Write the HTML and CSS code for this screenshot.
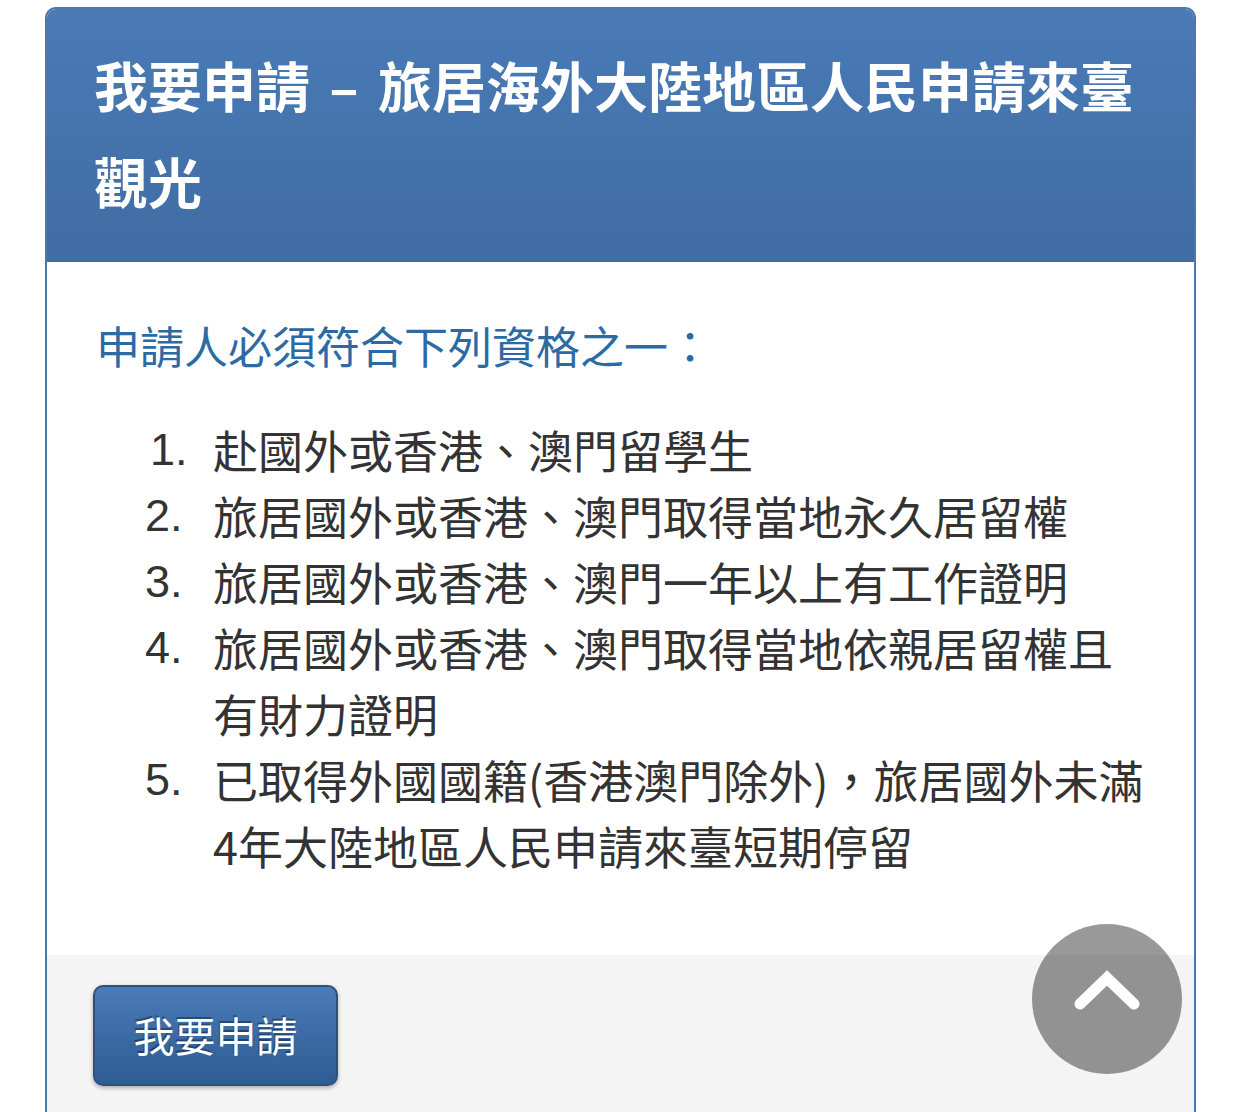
FILE: index.html
```html
<!DOCTYPE html>
<html lang="zh-Hant">
<head>
<meta charset="utf-8">
<title>我要申請</title>
<link rel="stylesheet" href="styles.css">
</head>
<body>
<div class="card">
  <div class="card-header">
    <h3 class="card-title">我要申請 – 旅居海外大陸地區人民申請來臺觀光</h3>
  </div>
  <div class="card-body">
    <p class="lead">申請人必須符合下列資格之一：</p>
    <ol class="reqs">
      <li><span class="num">1.</span><span class="txt">赴國外或香港、澳門留學生</span></li>
      <li><span class="num">2.</span><span class="txt">旅居國外或香港、澳門取得當地永久居留權</span></li>
      <li><span class="num">3.</span><span class="txt">旅居國外或香港、澳門一年以上有工作證明</span></li>
      <li><span class="num">4.</span><span class="txt">旅居國外或香港、澳門取得當地依親居留權且有財力證明</span></li>
      <li><span class="num">5.</span><span class="txt">已取得外國國籍(香港澳門除外)，旅居國外未滿4年大陸地區人民申請來臺短期停留</span></li>
    </ol>
  </div>
  <div class="card-footer">
    <a class="btn" href="#">我要申請</a>
  </div>
</div>
<a class="to-top" href="#" aria-label="回到頂端">
  <svg width="150" height="150" viewBox="0 0 150 150">
    <polyline points="48,80 75,54 102,80" fill="none" stroke="#fff" stroke-width="11" stroke-linecap="round" stroke-linejoin="miter"/>
  </svg>
</a>
</body>
</html>
```
FILE: styles.css
```css
html, body {
  margin: 0;
  padding: 0;
  background: #fff;
}
body {
  padding: 7px 46px 0 45px;
  font-family: "Noto Sans CJK TC", "Noto Sans", sans-serif;
  color: #333;
  height: 1112px;
  box-sizing: border-box;
  overflow: hidden;
}
.card {
  border: 2px solid #4a77ae;
  border-bottom: none;
  border-radius: 11px 11px 0 0;
  overflow: hidden;
}
.card-header {
  background: linear-gradient(to bottom, #4a7bb7 0%, #3f6ca2 100%);
  padding: 28px 40px 33px 47px;
}
.card-title {
  margin: 0;
  color: #fff;
  font-size: 54px;
  font-weight: 700;
  line-height: 96px;
  word-spacing: 7px;
}
.card-body {
  background: #fff;
  padding: 50px 42px 76px 49px;
}
.lead {
  margin: 0 0 39px;
  color: #2c6aa4;
  font-size: 44px;
  line-height: 66px;
}
.reqs {
  list-style: none;
  margin: 0;
  padding: 0 0 0 49px;
}
.reqs li {
  display: flex;
  font-size: 45px;
  line-height: 66px;
  color: #333;
}
.num {
  flex: 0 0 68px;
  font-family: "Liberation Sans", "Noto Sans CJK TC", sans-serif;
}
.reqs li:first-child .num {
  padding-left: 5px;
  flex-basis: 63px;
}
.txt {
  flex: 1 1 auto;
}
.card-footer {
  background: #f4f4f4;
  padding: 30px 46px 40px;
}
.btn {
  display: inline-flex;
  align-items: center;
  justify-content: center;
  box-sizing: border-box;
  width: 245px;
  height: 101px;
  padding-bottom: 3px;
  border: 2px solid #2c5180;
  border-radius: 10px;
  background: linear-gradient(to bottom, #4a7cb8 0%, #3a69a2 55%, #2f5c93 100%);
  box-shadow: 0 2px 4px rgba(0, 0, 0, 0.3);
  color: #fff;
  font-size: 41px;
  text-decoration: none;
  text-shadow: -1px -2px 0 rgba(0, 0, 0, 0.35);
}
.to-top {
  position: fixed;
  left: 1032px;
  top: 924px;
  width: 150px;
  height: 150px;
  border-radius: 50%;
  background: rgba(0, 0, 0, 0.4);
  display: flex;
}
```
